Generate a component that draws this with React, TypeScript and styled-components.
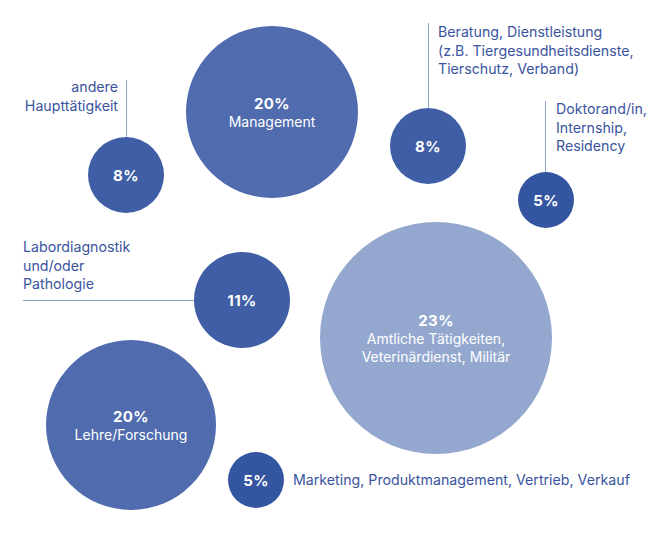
import React from "react";
import styled, { createGlobalStyle } from "styled-components";

const Global = createGlobalStyle`
  html, body { margin: 0; padding: 0; background: #ffffff; }
  body { font-family: "Inter", "Liberation Sans", sans-serif; }
`;

const Canvas = styled.div`
  position: relative;
  width: 670px;
  height: 537px;
  background: #ffffff;
  overflow: hidden;
  font-family: "Inter", "Liberation Sans", sans-serif;
`;

const Bubble = styled.div<{ $x: number; $y: number; $r: number; $c: string }>`
  position: absolute;
  left: ${(p) => p.$x - p.$r}px;
  top: ${(p) => p.$y - p.$r}px;
  width: ${(p) => p.$r * 2}px;
  height: ${(p) => p.$r * 2}px;
  border-radius: 50%;
  background: ${(p) => p.$c};
  color: #ffffff;
  display: flex;
  flex-direction: column;
  align-items: center;
  justify-content: center;
  text-align: center;
`;

const Pct = styled.div`
  font-size: 15px;
  font-weight: 700;
  line-height: 19px;
  letter-spacing: 0.4px;
`;

const Name = styled.div`
  font-size: 14px;
  font-weight: 400;
  line-height: 18px;
`;

const Callout = styled.div<{ $x: number; $y: number; $dir: "row" | "column"; $gap: number }>`
  position: absolute;
  left: ${(p) => p.$x}px;
  top: ${(p) => p.$y}px;
  display: flex;
  flex-direction: ${(p) => p.$dir};
  align-items: flex-start;
  gap: ${(p) => p.$gap}px;
`;

const Text = styled.div<{ $align?: "left" | "right"; $w?: number }>`
  color: #3a54a0;
  font-size: 14.2px;
  line-height: 18.5px;
  text-align: ${(p) => p.$align ?? "left"};
  white-space: nowrap;
  ${(p) => (p.$w ? `width: ${p.$w}px;` : "")}
`;

const VLine = styled.div<{ $h: number; $offset?: number }>`
  width: 1px;
  height: ${(p) => p.$h}px;
  margin-top: ${(p) => p.$offset ?? 0}px;
  background: #8ea2cd;
  flex: none;
`;

const HLine = styled.div<{ $w: number }>`
  height: 1px;
  width: ${(p) => p.$w}px;
  background: #8ea2cd;
  flex: none;
`;

const C_MID = "#506cae";
const C_DARK = "#3f5ea5";
const C_DARKER = "#3455a0";
const C_LIGHT = "#94a8cf";

export default function App() {
  return (
    <>
      <Global />
      <Canvas>
        <Callout $x={10} $y={78} $dir="row" $gap={8}>
          <Text $align="right" $w={108}>
            andere
            <br />
            Haupttätigkeit
          </Text>
          <VLine $h={58} $offset={2} />
        </Callout>
        <Callout $x={428} $y={23} $dir="row" $gap={9}>
          <VLine $h={86} />
          <Text>
            Beratung, Dienstleistung
            <br />
            (z.B. Tiergesundheitsdienste,
            <br />
            Tierschutz, Verband)
          </Text>
        </Callout>
        <Callout $x={545} $y={100} $dir="row" $gap={10}>
          <VLine $h={73} $offset={1} />
          <Text>
            Doktorand/in,
            <br />
            Internship,
            <br />
            Residency
          </Text>
        </Callout>
        <Callout $x={23} $y={238} $dir="column" $gap={6}>
          <Text>
            Labordiagnostik
            <br />
            und/oder
            <br />
            Pathologie
          </Text>
          <HLine $w={173} />
        </Callout>
        <Callout $x={293} $y={471} $dir="row" $gap={0}>
          <Text>Marketing, Produktmanagement, Vertrieb, Verkauf</Text>
        </Callout>

        <Bubble $x={126} $y={175} $r={38} $c={C_DARK}>
          <Pct>8%</Pct>
        </Bubble>
        <Bubble $x={272} $y={112} $r={86} $c={C_MID}>
          <Pct>20%</Pct>
          <Name>Management</Name>
        </Bubble>
        <Bubble $x={428} $y={146} $r={38} $c={C_DARK}>
          <Pct>8%</Pct>
        </Bubble>
        <Bubble $x={546} $y={200} $r={28} $c={C_DARKER}>
          <Pct>5%</Pct>
        </Bubble>
        <Bubble $x={242} $y={300} $r={48} $c={C_DARK}>
          <Pct>11%</Pct>
        </Bubble>
        <Bubble $x={436} $y={338} $r={116} $c={C_LIGHT}>
          <Pct>23%</Pct>
          <Name>
            Amtliche Tätigkeiten,
            <br />
            Veterinärdienst, Militär
          </Name>
        </Bubble>
        <Bubble $x={131} $y={425} $r={85} $c={C_MID}>
          <Pct>20%</Pct>
          <Name>Lehre/Forschung</Name>
        </Bubble>
        <Bubble $x={256} $y={480} $r={28} $c={C_DARKER}>
          <Pct>5%</Pct>
        </Bubble>
      </Canvas>
    </>
  );
}
